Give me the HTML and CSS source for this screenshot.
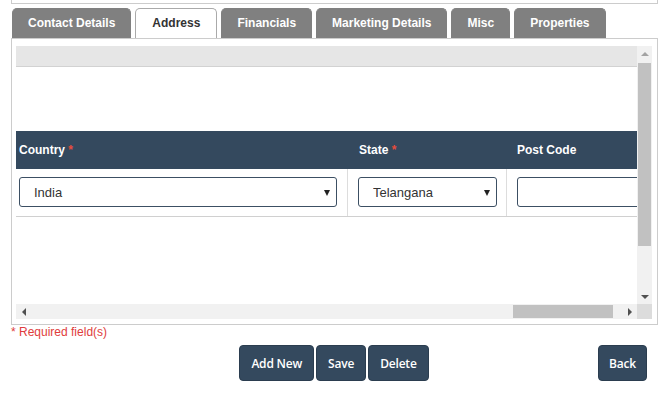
FILE: index.html
```html
<!DOCTYPE html>
<html lang="en">
	<head>
		<title>Address</title>
		<link rel="stylesheet" href="styles.css">
	</head>
	<body>
		<div class="page">
			<div class="top-box"></div>
			<ul class="tabs">
				<li class="tab">Contact Details</li>
				<li class="tab active">Address</li>
				<li class="tab">Financials</li>
				<li class="tab">Marketing Details</li>
				<li class="tab">Misc</li>
				<li class="tab">Properties</li>
			</ul>
			<div class="panel">
				<div class="scroller">
					<div class="viewport">
						<div class="toolbar"></div>
						<div class="spacer"></div>
						<div class="grid-head">
							<div class="cell c1">Country <span class="req">*</span></div>
							<div class="cell c2">State <span class="req">*</span></div>
							<div class="cell c3">Post Code</div>
						</div>
						<div class="grid-row">
							<div class="cell c1">
								<div class="select">
									<select><option>India</option></select>
								</div>
							</div>
							<div class="cell c2">
								<div class="select">
									<select><option>Telangana</option></select>
								</div>
							</div>
							<div class="cell c3">
								<input class="input" type="text">
							</div>
						</div>
					</div>
					<div class="vbar">
						<span class="btn"><i class="arrow up off"></i></span>
						<span class="track"><span class="thumb"></span></span>
						<span class="btn"><i class="arrow down"></i></span>
					</div>
					<div class="hbar">
						<span class="btn"><i class="arrow left"></i></span>
						<span class="track"><span class="thumb"></span></span>
						<span class="btn"><i class="arrow right"></i></span>
					</div>
					<div class="corner"></div>
				</div>
			</div>
			<p class="required">* Required field(s)</p>
		</div>
		<div class="actions">
			<div class="group">
				<button class="button">Add New</button>
				<button class="button">Save</button>
				<button class="button">Delete</button>
			</div>
			<button class="button back">Back</button>
		</div>
	</body>
</html>
```

FILE: styles.css
```css
* {
  margin: 0;
  padding: 0;
  box-sizing: border-box;
}

body {
  font-family: "Liberation Sans", Arial, sans-serif;
  background-color: #fff;
  color: #333;
}

ul {
  list-style: none;
}

.page {
  width: 668px;
  padding: 0 10px 0 11px;
}

.top-box {
  height: 4px;
  border: 1px solid #ccc;
  border-top: 0;
}

/* tabs */
.tabs {
  display: flex;
  gap: 4px;
  margin: 4px 0 0 1px;
}

.tab {
  height: 30px;
  line-height: 29px;
  padding: 0 15px;
  border: 1px solid #808080;
  border-bottom: 0;
  border-radius: 5px 5px 0 0;
  background-color: #808080;
  color: #fff;
  font-size: 12px;
  font-weight: bold;
}

.tab.active {
  background-color: #fff;
  border-color: #aaa;
  color: #333;
  padding: 0 16px;
}

/* panel with grid */
.panel {
  height: 287px;
  border: 1px solid #ccc;
  padding: 7px 5px 5px 4px;
}

.scroller {
  display: grid;
  grid-template-columns: 1fr 15px;
  grid-template-rows: 1fr 15px;
  height: 100%;
}

.viewport {
  overflow: hidden;
}

.toolbar {
  height: 21px;
  background-color: #e6e6e6;
  border-bottom: 1px solid #d2d2d2;
}

.spacer {
  height: 64px;
}

.grid-head,
.grid-row {
  display: flex;
  width: 700px;
}

.grid-head {
  height: 38px;
  align-items: center;
  background-color: #34495e;
  color: #fff;
  font-size: 12px;
  font-weight: bold;
}

.grid-head .c1 {
  padding-left: 3px;
}

.grid-head .c2 {
  padding-left: 12px;
}

.grid-head .c3 {
  padding-left: 11px;
}

.req {
  color: #e74c3c;
}

.c1 {
  width: 331px;
}

.c2 {
  width: 159px;
}

.c3 {
  width: 210px;
}

.grid-row {
  height: 48px;
  border-bottom: 1px solid #d0d0d0;
}

.grid-row .cell {
  padding-top: 8px;
}

.grid-row .c1 {
  padding-left: 3px;
  padding-right: 10px;
}

.grid-row .c2 {
  border-left: 1px solid #ddd;
  padding-left: 10px;
  padding-right: 9px;
}

.grid-row .c3 {
  border-left: 1px solid #ddd;
  padding-left: 10px;
}

.select {
  position: relative;
}

.select select,
.input {
  display: block;
  width: 100%;
  height: 30px;
  border: 1px solid #3c4f63;
  border-radius: 3px;
  background-color: #fff;
  font-family: "Liberation Sans", Arial, sans-serif;
  font-size: 13px;
  color: #333;
  outline: none;
}

.select select {
  appearance: none;
  -webkit-appearance: none;
  padding-left: 14px;
}

.select::after {
  content: "";
  position: absolute;
  right: 7px;
  top: 13px;
  border-left: 3px solid transparent;
  border-right: 3px solid transparent;
  border-top: 6px solid #222;
}

.input {
  width: 140px;
}

/* scrollbars */
.vbar,
.hbar {
  display: flex;
  background-color: #f1f1f1;
}

.vbar {
  flex-direction: column;
}

.btn {
  display: flex;
  align-items: center;
  justify-content: center;
  width: 15px;
  height: 15px;
  flex: none;
}

.track {
  flex: 1;
  display: flex;
}

.vbar .track {
  flex-direction: column;
  padding: 2px 1px 0;
}

.vbar .thumb {
  height: 183px;
  background-color: #c1c1c1;
}

.hbar .track {
  padding: 1px 0 1px 482px;
}

.hbar .thumb {
  width: 100px;
  background-color: #c1c1c1;
}

.corner {
  background-color: #dcdcdc;
}

.arrow {
  width: 0;
  height: 0;
  border: 4px solid transparent;
}

.arrow.up {
  border-top: 0;
  border-bottom: 4px solid #505050;
}

.arrow.up.off {
  border-bottom-color: #a3a3a3;
}

.arrow.down {
  border-bottom: 0;
  border-top: 4px solid #505050;
}

.arrow.left {
  border-left: 0;
  border-right: 4px solid #505050;
}

.arrow.right {
  border-right: 0;
  border-left: 4px solid #505050;
}

.required {
  height: 14px;
  font-size: 12px;
  line-height: 14px;
  color: #e03c3c;
}

/* buttons */
.actions {
  display: grid;
  grid-template-columns: 1fr auto 1fr;
  width: 668px;
  margin-top: 6px;
}

.group {
  grid-column: 2;
  display: flex;
  gap: 2px;
}

.button {
  height: 36px;
  padding: 0 11px;
  border: 1px solid #2b3d4f;
  border-radius: 4px;
  background-color: #34495e;
  color: #fff;
  font-family: "Open Sans", sans-serif;
  font-size: 12px;
  font-weight: 600;
  letter-spacing: -0.2px;
}

.back {
  grid-column: 3;
  justify-self: end;
  margin-right: 21px;
  padding: 0 10px;
}
```
